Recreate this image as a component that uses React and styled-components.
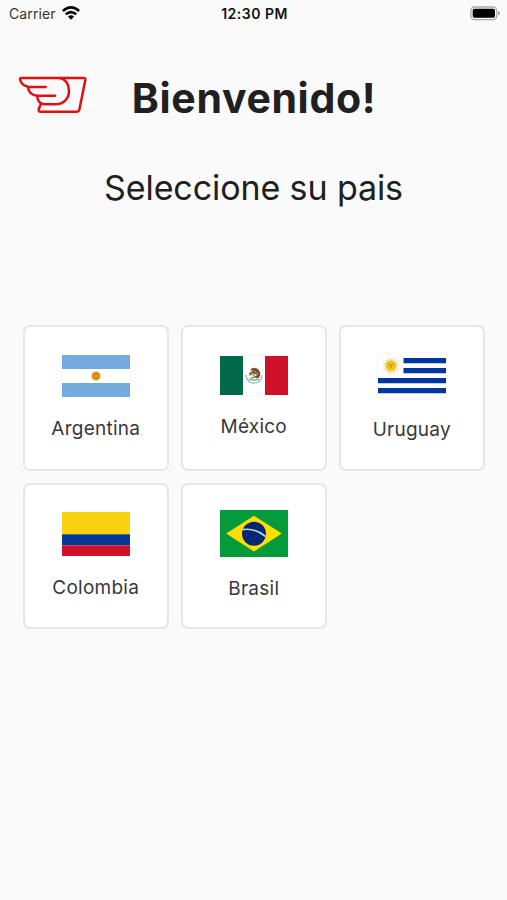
import React from 'react';
import styled, { createGlobalStyle } from 'styled-components';

const GlobalStyle = createGlobalStyle`
  * {
    box-sizing: border-box;
  }

  body {
    margin: 0;
    background-color: #fafafa;
    color: #202022;
    font-family: Inter, 'Liberation Sans', sans-serif;
  }
`;

const Screen = styled.div`
  min-height: 900px;
  background-color: #fafafa;
`;

const StatusBar = styled.div`
  display: grid;
  grid-template-columns: 1fr auto 1fr;
  align-items: center;
  height: 26px;
  padding: 0 7px 0 9px;
  color: #111;
`;

const Carrier = styled.div`
  display: flex;
  align-items: center;
  gap: 6px;
  font-size: 14px;
  letter-spacing: 0.1px;
  color: #333;
`;

const Clock = styled.div`
  font-size: 14px;
  font-weight: 600;
  letter-spacing: 0.5px;
`;

const Battery = styled.svg`
  justify-self: end;
`;

const Header = styled.header`
  display: grid;
  grid-template-columns: 90px 1fr 90px;
  align-items: center;
  height: 60px;
  margin-top: 39px;
  padding: 0 9px 0 10px;
`;

const Title = styled.h1`
  margin: 6px 0 0;
  font-size: 41px;
  font-weight: 700;
  line-height: 50px;
  letter-spacing: 0.65px;
  text-align: center;
  white-space: nowrap;
`;

const Subtitle = styled.h2`
  margin: 42px 0 0;
  font-size: 34px;
  font-weight: 400;
  line-height: 42px;
  letter-spacing: -0.1px;
  text-align: center;
`;

const CountryGrid = styled.div`
  display: grid;
  grid-template-columns: repeat(3, 145.5px);
  gap: 12.5px;
  margin-top: 116px;
  padding-left: 23px;
`;

const Card = styled.button`
  display: flex;
  flex-direction: column;
  align-items: center;
  justify-content: center;
  gap: 20px;
  height: 145.5px;
  padding: 0;
  background-color: #fff;
  border: 2px solid #e6e6e6;
  border-radius: 7px;
  color: #38383a;
  font-family: inherit;
  font-size: 19px;
  line-height: 24px;
  letter-spacing: 0.25px;
  cursor: pointer;
`;

const Flag = styled.svg`
  display: block;
  flex: none;
  width: 68px;
  height: ${({ $height }) => $height}px;
  overflow: visible;
`;

const Wings = () => (
  <svg width="90" height="60" viewBox="0 0 270 180" fill="none" stroke="#df1012" strokeWidth="7.5" strokeLinecap="round" strokeLinejoin="round">
    <path d="M107 66H56C40 62 31 53 30 42Q30 39 34 39H221Q227 39 226 45L208 134Q207 140 201 140H92Q85 140 86 133L93 116" />
    <path d="M54 67C56 82 66 91 82 92H135" />
    <path d="M82 94C82 108 91 118 105 118H137C161 118 177 100 177 77C177 56 165 42 150 39" />
  </svg>
);

const WifiIcon = () => (
  <svg width="18" height="14" viewBox="0 0 18 14" fill="none" stroke="#050505" strokeWidth="2.6">
    <path d="M0.8 5Q9 -2.2 17.2 5" />
    <path d="M3.8 8.3Q9 3.8 14.2 8.3" />
    <path d="M9 13.8L5.9 10.6Q9 7.9 12.1 10.6Z" fill="#050505" stroke="none" />
  </svg>
);

const BatteryIcon = () => (
  <Battery width="30" height="15" viewBox="0 0 30 15">
    <rect x="0.8" y="1" width="26" height="12.6" rx="3.8" fill="#fafafa" stroke="#aaa" strokeWidth="1.3" />
    <rect x="2.7" y="2.8" width="22.3" height="9" rx="1.8" fill="#000" />
    <path d="M28 5Q30 5.5 30 7.3T28 9.6Z" fill="#aaa" />
  </Battery>
);

const rays = (count) => Array.from({ length: count }, (_, i) => (i * 360) / count);

const ArgentinaFlag = () => (
  <Flag $height={42} viewBox="0 0 68 42">
    <path d="M0 0H68V14H0ZM0 28H68V42H0Z" fill="#75aadf" />
    <path d="M-0.5 14V28M68.5 14V28" stroke="#f5f5f5" />
    <g stroke="#e8ba7a" strokeWidth="0.8">
      {rays(16).map((a) => (
        <path key={a} d="M34 15.5V21" transform={`rotate(${a} 34 21)`} />
      ))}
    </g>
    <circle cx="34" cy="21" r="4" fill="#d9921f" />
    <circle cx="34" cy="21" r="2.5" fill="#ea9d0b" stroke="#b9741e" strokeWidth="0.7" />
  </Flag>
);

const MexicoFlag = () => (
  <Flag $height={39} viewBox="0 0 68 39">
    <rect width="23" height="39" fill="#00694a" />
    <rect x="45" width="23" height="39" fill="#cf1029" />
    <path d="M23 -1H45M23 40H45" stroke="#f4f4f4" />
    <path d="M26 19Q27 27 34 27T42 19" fill="none" stroke="#8eaa9b" strokeWidth="1.5" strokeDasharray="2 0.7" />
    <path d="M29 23Q34 25 39 23" fill="none" stroke="#6eb3bb" strokeWidth="1.5" />
    <path d="M30 14Q33 10.5 37 12.5Q41 15 40 20Q38 24 34 21L37 19L32 17L30 19L29 17L33 15Z" fill="#76502f" />
    <path d="M29 19L33 18L35 21L31 22" fill="none" stroke="#a58a52" strokeWidth="1.3" />
    <path d="M34 15L38 18L36 20" fill="none" stroke="#b79a6b" />
  </Flag>
);

const UruguayFlag = () => (
  <Flag $height={45} viewBox="0 0 68 45">
    <rect x="-0.5" y="-0.5" width="69" height="46" fill="#fff" stroke="#f7f7f7" />
    <path d="M25.5 5H68V10.2H25.5ZM25.5 15H68V20.2H25.5ZM0 25H68V30.2H0ZM0 35H68V40.2H0Z" fill="#00369e" />
    <g fill="#e9bd25">
      {rays(16).map((a) => (
        <path key={a} d="M11.7 13L13 3.5L14.3 13Z" transform={`rotate(${a} 13 12.7)`} />
      ))}
    </g>
    <circle cx="13" cy="12.7" r="5" fill="#efc21d" />
    <path d="M10.5 11L13 12.5L15.5 11M13 12.5V15" fill="none" stroke="#a68215" strokeWidth="0.8" />
  </Flag>
);

const ColombiaFlag = () => (
  <Flag $height={44} viewBox="0 0 68 44">
    <rect width="68" height="22.3" fill="#fbd20f" />
    <rect y="22.3" width="68" height="11" fill="#043893" />
    <rect y="33.3" width="68" height="10.7" fill="#d21029" />
  </Flag>
);

const BrazilFlag = () => (
  <Flag $height={47} viewBox="0 0 68 47">
    <rect width="68" height="47" fill="#059b3a" />
    <path d="M34 5.8L61.8 23.5L34 41.4L6.2 23.5Z" fill="#fedf00" />
    <circle cx="34" cy="23.7" r="12" fill="#062672" />
    <path d="M22.5 19.6Q35 17.7 45.6 26.5" fill="none" stroke="#b2d7dc" strokeWidth="1.7" />
    <g fill="#6078a6">
      <circle cx="27" cy="25" r="0.5" />
      <circle cx="31" cy="29" r="0.5" />
      <circle cx="36" cy="27" r="0.5" />
      <circle cx="40" cy="29" r="0.5" />
      <circle cx="34" cy="33" r="0.5" />
      <circle cx="37" cy="17" r="0.4" />
    </g>
  </Flag>
);

const countries = [
  { name: 'Argentina', flag: ArgentinaFlag },
  { name: 'México', flag: MexicoFlag },
  { name: 'Uruguay', flag: UruguayFlag },
  { name: 'Colombia', flag: ColombiaFlag },
  { name: 'Brasil', flag: BrazilFlag },
];

const App = () => (
  <>
    <GlobalStyle />
    <Screen>
      <StatusBar>
        <Carrier>
          Carrier
          <WifiIcon />
        </Carrier>
        <Clock>12:30 PM</Clock>
        <BatteryIcon />
      </StatusBar>
      <Header>
        <Wings />
        <Title>Bienvenido!</Title>
      </Header>
      <Subtitle>Seleccione su pais</Subtitle>
      <CountryGrid>
        {countries.map(({ name, flag: CountryFlag }) => (
          <Card key={name} type="button">
            <CountryFlag />
            <span>{name}</span>
          </Card>
        ))}
      </CountryGrid>
    </Screen>
  </>
);

export default App;
